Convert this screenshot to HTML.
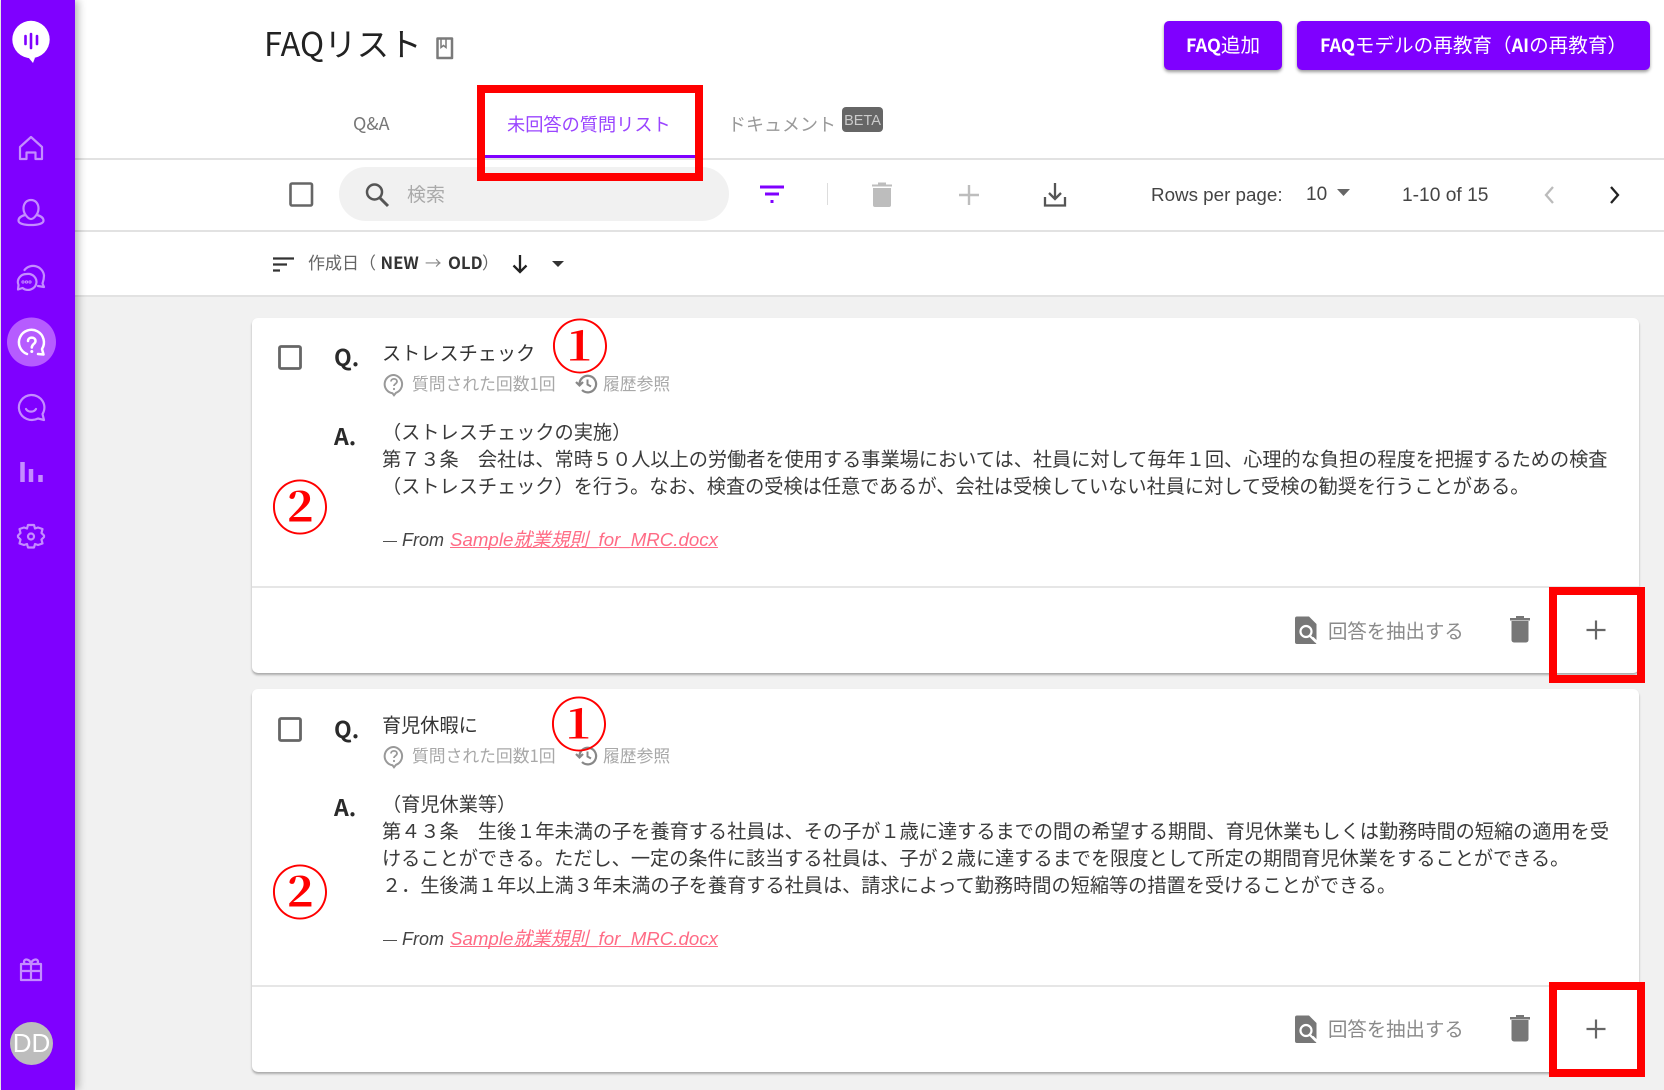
<!DOCTYPE html>
<html lang="ja"><head><meta charset="utf-8"><title>FAQリスト</title>
<style>
html,body{margin:0;padding:0;background:#f1f1f1}
#p{position:relative;width:1664px;height:1090px;overflow:hidden;background:#f1f1f1;font-family:"Liberation Sans","Noto Sans CJK JP",sans-serif;color:#333}
.t{position:absolute;white-space:nowrap;line-height:30px;height:30px}
.j{font-family:"Noto Sans CJK JP","Liberation Sans",sans-serif}
.b{position:absolute}
.card{position:absolute;left:252px;width:1387px;background:#fff;border-radius:6px;box-shadow:0 2px 2px #aaa}
.red{position:absolute;border:8px solid #f00;box-sizing:border-box}
.num{position:absolute;color:#f00;font-family:"Noto Serif CJK SC",serif;font-weight:700;font-size:58px;line-height:60px;width:60px;text-align:center}
.body{font-size:19.18px;color:#3a3a3a}
.meta{font-size:16.8px;color:#a8a8a8}
.qa{font-size:23px;font-weight:700;color:#2a2a2a}
.act{font-size:19.4px;color:#8a8a8a}
.from{font-size:18px;font-style:italic;color:#444}
.link{font-size:18.7px;font-style:italic;color:#ff6b85;text-decoration:underline;text-decoration-skip-ink:none}
.btn{font-size:19.6px;font-weight:400;color:#fff;text-align:center}
.btn b{font-size:18px;font-weight:700}
svg{position:absolute;left:0;top:0}
</style></head><body><div id="p">

<!-- header surfaces -->
<div class="b" style="left:75px;top:0;width:1589px;height:296px;background:#fff"></div>
<div class="b" style="left:75px;top:158px;width:1589px;height:2px;background:#e2e2e2"></div>
<div class="b" style="left:75px;top:230px;width:1589px;height:2px;background:#e2e2e2"></div>
<div class="b" style="left:75px;top:295px;width:1589px;height:2px;background:#e2e2e2"></div>
<div class="b" style="left:1px;top:0;width:74px;height:1090px;background:#7f00ff;box-shadow:3px 0 8px rgba(0,0,0,.3)"></div>

<!-- top -->
<div class="t j" style="left:264px;top:19px;height:48px;line-height:48px;font-size:32.5px;color:#222">FAQリスト</div>
<div class="b" style="left:1164px;top:21px;width:118px;height:49px;background:#7f00ff;border-radius:5px;box-shadow:0 2px 3px rgba(0,0,0,.4)"></div>
<div class="b" style="left:1297px;top:21px;width:353px;height:49px;background:#7f00ff;border-radius:5px;box-shadow:0 2px 3px rgba(0,0,0,.4)"></div>
<div class="t j btn" style="left:1164px;width:118px;top:29px"><b>FAQ</b>追加</div>
<div class="t j btn" style="left:1297px;width:353px;top:29px"><b>FAQ</b>モデルの再教育（<b>AI</b>の再教育）</div>

<!-- tabs -->
<div class="t j" style="left:353px;top:108px;font-size:18px;color:#777">Q&amp;A</div>
<div class="t j" style="left:507px;top:109px;font-size:18.2px;color:#9a45ff">未回答の質問リスト</div>
<div class="t j" style="left:728px;top:109px;font-size:18px;color:#999">ドキュメント</div>
<div class="b" style="left:842px;top:107px;width:40.5px;height:25px;background:#666;border-radius:4px"></div>
<div class="t" style="left:842px;width:41px;text-align:center;top:106px;font-size:14.5px;color:#ccc">BETA</div>
<div class="b" style="left:485px;top:155px;width:212px;height:3px;background:#7f00ff"></div>

<!-- toolbar -->
<div class="b" style="left:339px;top:167px;width:390px;height:54px;border-radius:27px;background:#f1f1f1"></div>
<div class="t j" style="left:407px;top:179px;font-size:19px;color:#aaa">検索</div>
<div class="b" style="left:827px;top:183px;width:1px;height:22px;background:#ddd"></div>
<div class="t" style="left:1151px;top:180px;font-size:18.8px;color:#444">Rows per page:</div>
<div class="t" style="left:1306px;top:180px;font-size:19px;color:#444">10</div>
<div class="t" style="left:1402px;top:181px;font-size:19.2px;color:#444">1-10 of 15</div>

<!-- sort -->
<div class="t j" style="left:308px;top:247px;font-size:17px;color:#666">作成日（</div>
<div class="t j" style="left:380.500px;top:247px;font-size:16.8px;font-weight:700;color:#333">NEW</div>
<div class="t j" style="left:425px;top:247px;font-size:16.5px;color:#888">→</div>
<div class="t j" style="left:448px;top:247px;font-size:16.8px;font-weight:700;color:#333">OLD</div>
<div class="t j" style="left:482px;top:247px;font-size:17px;color:#666">）</div>

<!-- card 1 -->
<div class="card" style="top:318px;height:355px"></div>
<div class="b" style="left:252px;top:586px;width:1387px;height:2px;background:#e6e6e6"></div>
<div class="t j qa" style="left:334px;top:341px">Q.</div>
<div class="t j" style="left:382px;top:337px;font-size:19.17px;color:#333">ストレスチェック</div>
<div class="t j meta" style="left:412px;top:368px">質問された回数1回</div>
<div class="t j meta" style="left:603px;top:368px">履歴参照</div>
<div class="t j qa" style="left:334px;top:420px">A.</div>
<div class="t j body" style="left:382px;top:416px">（ストレスチェックの実施）</div>
<div class="t j body" style="left:382px;top:443px">第７３条　会社は、常時５０人以上の労働者を使用する事業場においては、社員に対して毎年１回、心理的な負担の程度を把握するための検査</div>
<div class="t j body" style="left:382px;top:470px">（ストレスチェック）を行う。なお、検査の受検は任意であるが、会社は受検していない社員に対して受検の勧奨を行うことがある。</div>
<div class="t from" style="left:383px;top:524px"><span style="font-size:14px;font-style:normal">—</span></div>
<div class="t from" style="left:402px;top:525px">From</div>
<div class="t link" style="left:450px;top:525px">Sample就業規則_for_MRC.docx</div>
<div class="t j act" style="left:1328px;top:615px">回答を抽出する</div>

<!-- card 2 -->
<div class="card" style="top:689px;height:383px"></div>
<div class="b" style="left:252px;top:985px;width:1387px;height:2px;background:#e6e6e6"></div>
<div class="t j qa" style="left:334px;top:713px">Q.</div>
<div class="t j" style="left:382px;top:709px;font-size:19.17px;color:#333">育児休暇に</div>
<div class="t j meta" style="left:412px;top:740px">質問された回数1回</div>
<div class="t j meta" style="left:603px;top:740px">履歴参照</div>
<div class="t j qa" style="left:334px;top:791px">A.</div>
<div class="t j body" style="left:382px;top:788px">（育児休業等）</div>
<div class="t j body" style="left:382px;top:815px">第４３条　生後１年未満の子を養育する社員は、その子が１歳に達するまでの間の希望する期間、育児休業もしくは勤務時間の短縮の適用を受</div>
<div class="t j body" style="left:382px;top:842px">けることができる。ただし、一定の条件に該当する社員は、子が２歳に達するまでを限度として所定の期間育児休業をすることができる。</div>
<div class="t j body" style="left:382px;top:869px">２．生後満１年以上満３年未満の子を養育する社員は、請求によって勤務時間の短縮等の措置を受けることができる。</div>
<div class="t from" style="left:383px;top:923px"><span style="font-size:14px;font-style:normal">—</span></div>
<div class="t from" style="left:402px;top:924px">From</div>
<div class="t link" style="left:450px;top:924px">Sample就業規則_for_MRC.docx</div>
<div class="t j act" style="left:1328px;top:1013px">回答を抽出する</div>

<!-- avatar -->
<div class="b" style="left:10px;top:1022px;width:43px;height:43px;border-radius:50%;background:#bdbdbd"></div>
<div class="t" style="left:10px;width:43px;text-align:center;top:1028px;font-size:26px;color:#fff">DD</div>

<!-- icons -->
<svg width="1664" height="1090" viewBox="0 0 1664 1090" fill="none">
  <!-- logo -->
  <path d="M28 57l5 6 2-5.300z" fill="#fff"/>
  <circle cx="31" cy="39.500" r="18.700" fill="#fff"/>
  <path d="M25.500 36v8M31 34v14M37 36v8" stroke="#7f00ff" stroke-width="2.600" stroke-linecap="round"/>
  <!-- nav -->
  <g stroke="#c48cff" stroke-width="2.200" stroke-linejoin="round" stroke-linecap="round">
    <path d="M20 159V147L31 137L42 147V159H35.500V152.500H26.500V159Z"/>
    <path d="M31 200c-4.500 0-7.500 3.500-7.500 8.500 0 3.500 1.800 6.500 3.800 8.500 1 1 2.200 2 3.700 2s2.700-1 3.700-2c2-2 3.800-5 3.800-8.500C38.500 203.500 35.500 200 31 200z"/>
    <path d="M25 215c-4.500 1.200-6.500 3.500-6.500 5.700C18.500 223.500 24 225 31 225s12.500-1.500 12.500-4.300c0-2.200-2-4.500-6.500-5.700"/>
    <path d="M24.500 270A11 11 0 0 1 44 275.500c0 3-.8 6-1.500 8l1.500 3.500-6-1"/>
    <path d="M26.500 274a8.500 8 0 0 0-8 11l-.5 4.500 4.500-1.500a8.500 8 0 1 0 4-14z" fill="#7f00ff"/>
    <circle cx="23" cy="282" r=".5"/><circle cx="26.500" cy="282" r=".5"/><circle cx="30" cy="282" r=".5"/>
    <path d="M31 395a13 12.500 0 1 0 7 23.500l6 1.500-1.500-6A13 12.500 0 0 0 31 395z"/>
    <path d="M26 409c2 3.500 8 3.500 10 0"/>
    <path d="M22.500 462v20M31 469v13M40.500 475v7" stroke-width="4.500" stroke-linecap="butt"/>
    <path d="M28 525h6l1 3.500 3-1 4.500 1.500-1 4 2.500 2.500V537l-2.500 2.500 1 4-4.500 1.500-3-1-1 3.500h-6l-1-3.500-3 1-4.500-1.500 1-4L18 537v-1.500l2.500-2.500-1-4 4.500-1.500 3 1z"/>
    <circle cx="31" cy="536.500" r="3"/>
    <path d="M21 964h20v16H21zM31 964v16M21 971h20M31 964c-1-5-7-6-7-2 0 1.500 1 2 2 2M31 964c1-5 7-6 7-2 0 1.500-1 2-2 2"/>
  </g>
  <!-- active nav -->
  <circle cx="31.500" cy="342" r="24.500" fill="#b65cff"/>
  <path d="M27 354A12.500 12.500 0 1 1 42 349L43.500 354.500 38 354" stroke="#fff" stroke-width="2.500" stroke-linecap="round" stroke-linejoin="round"/>
  <path d="M28 341c0-4.500 7.500-4.500 7.500 0 0 3-3.700 3-3.700 6.500" stroke="#fff" stroke-width="2.500" stroke-linecap="round"/>
  <circle cx="31.800" cy="351.500" r="1.500" fill="#fff"/>
  <!-- bookmark -->
  <path d="M437.500 38.500h14.500v19.500h-14.500z" stroke="#7a7a7a" stroke-width="2.500" stroke-linejoin="round"/>
  <path d="M441 39v8.500l2.500-2 2.500 2V39" stroke="#7a7a7a" stroke-width="1.500"/>
  <!-- toolbar -->
  <rect x="290.500" y="183.500" width="21.500" height="22" rx="1.500" stroke="#666" stroke-width="2.600"/>
  <circle cx="374.500" cy="192" r="7.500" stroke="#555" stroke-width="2.500"/>
  <path d="M380 198l8 8" stroke="#555" stroke-width="3"/>
  <path d="M760 187h24M765 194h14M770.500 201.500h3" stroke="#7f00ff" stroke-width="3"/>
  <path d="M873 188h18v17a2 2 0 0 1-2 2h-14a2 2 0 0 1-2-2z" fill="#bdbdbd"/>
  <path d="M872 184.500h20v2h-20zM878 182.500h8v2h-8z" fill="#bdbdbd"/>
  <path d="M969 185v20M959 195h20" stroke="#bdbdbd" stroke-width="2.400"/>
  <path d="M1055 183v15.500M1049 193l6 6 6-6" stroke="#555" stroke-width="2.300"/>
  <path d="M1045 197v8.500h20V197" stroke="#555" stroke-width="2.300"/>
  <path d="M1337 189h13l-6.500 7z" fill="#666"/>
  <path d="M1553 187l-7 8 7 8" stroke="#bbb" stroke-width="2.300"/>
  <path d="M1611 187l7 8-7 8" stroke="#222" stroke-width="2.300"/>
  <!-- sort -->
  <path d="M273 258.500h21M273 264.500h14M273 270.500h7" stroke="#333" stroke-width="2.200"/>
  <path d="M520 255v17M513.500 265.500L520 272l6.500-6.500" stroke="#222" stroke-width="2.300"/>
  <path d="M552 261h12l-6 6z" fill="#333"/>
  <!-- card checkboxes -->
  <g stroke="#666" stroke-width="2.800">
    <rect x="279.500" y="346.500" width="21" height="22" rx="1.500"/>
    <rect x="279.500" y="718.500" width="21" height="22" rx="1.500"/>
  </g>
  <!-- meta icons and footers -->
  <g>
    <path d="M394 375a9.200 9.200 0 0 0-1.500 18.300l1.500 2 2-2.500a9.200 9.200 0 0 0-2-17.800z" stroke="#999" stroke-width="2"/>
    <path d="M391 381.500c0-3.500 6-3.500 6 0 0 2.300-3 2.300-3 4.500" stroke="#999" stroke-width="1.800"/><circle cx="394" cy="389" r="1.100" fill="#999"/>
    <path d="M579.500 384a8.300 8.300 0 1 1 2.500 6" stroke="#888" stroke-width="2.200"/><path d="M576 382l3.500 3.500 3.500-3.500" stroke="#888" stroke-width="2.200"/><path d="M587.500 379.500v5l3.500 2" stroke="#888" stroke-width="2"/>
  </g>
  <g transform="translate(0 372)">
    <path d="M394 375a9.200 9.200 0 0 0-1.500 18.300l1.500 2 2-2.500a9.200 9.200 0 0 0-2-17.800z" stroke="#999" stroke-width="2"/>
    <path d="M391 381.500c0-3.500 6-3.500 6 0 0 2.300-3 2.300-3 4.500" stroke="#999" stroke-width="1.800"/><circle cx="394" cy="389" r="1.100" fill="#999"/>
    <path d="M579.500 384a8.300 8.300 0 1 1 2.500 6" stroke="#888" stroke-width="2.200"/><path d="M576 382l3.500 3.500 3.500-3.500" stroke="#888" stroke-width="2.200"/><path d="M587.500 379.500v5l3.500 2" stroke="#888" stroke-width="2"/>
  </g>
  <g>
    <path d="M1297 616.500h12l7.500 7.500v16l-3-3a8 8 0 0 0-2 0.500l5 6.500h-19.500a2 2 0 0 1-2-2v-23.500a2 2 0 0 1 2-2z" fill="#777"/>
    <circle cx="1306" cy="631.500" r="5.500" stroke="#fff" stroke-width="2.200"/><path d="M1310 636l6 6" stroke="#fff" stroke-width="2.200"/>
    <path d="M1511.500 621h17v19a2.500 2.500 0 0 1-2.500 2.500h-12a2.500 2.500 0 0 1-2.500-2.500z" fill="#777"/>
    <path d="M1510 618h20v2.500h-20zM1516 616h8v2h-8z" fill="#777"/>
    <path d="M1596 620.500v19M1586.500 630h19" stroke="#666" stroke-width="2.200"/>
  </g>
  <g transform="translate(0 399)">
    <path d="M1297 616.500h12l7.500 7.500v16l-3-3a8 8 0 0 0-2 0.500l5 6.500h-19.500a2 2 0 0 1-2-2v-23.500a2 2 0 0 1 2-2z" fill="#777"/>
    <circle cx="1306" cy="631.500" r="5.500" stroke="#fff" stroke-width="2.200"/><path d="M1310 636l6 6" stroke="#fff" stroke-width="2.200"/>
    <path d="M1511.500 621h17v19a2.500 2.500 0 0 1-2.500 2.500h-12a2.500 2.500 0 0 1-2.500-2.500z" fill="#777"/>
    <path d="M1510 618h20v2.500h-20zM1516 616h8v2h-8z" fill="#777"/>
    <path d="M1596 620.500v19M1586.500 630h19" stroke="#666" stroke-width="2.200"/>
  </g>
</svg>

<!-- annotations -->
<div class="red" style="left:477px;top:85px;width:226px;height:96px"></div>
<div class="red" style="left:1549px;top:587px;width:95.500px;height:96px"></div>
<div class="red" style="left:1549px;top:982px;width:95.500px;height:95px"></div>
<div class="num" style="left:550px;top:313px">①</div>
<div class="num" style="left:270px;top:474px">②</div>
<div class="num" style="left:549px;top:691px">①</div>
<div class="num" style="left:270px;top:859px">②</div>
</div></body></html>
